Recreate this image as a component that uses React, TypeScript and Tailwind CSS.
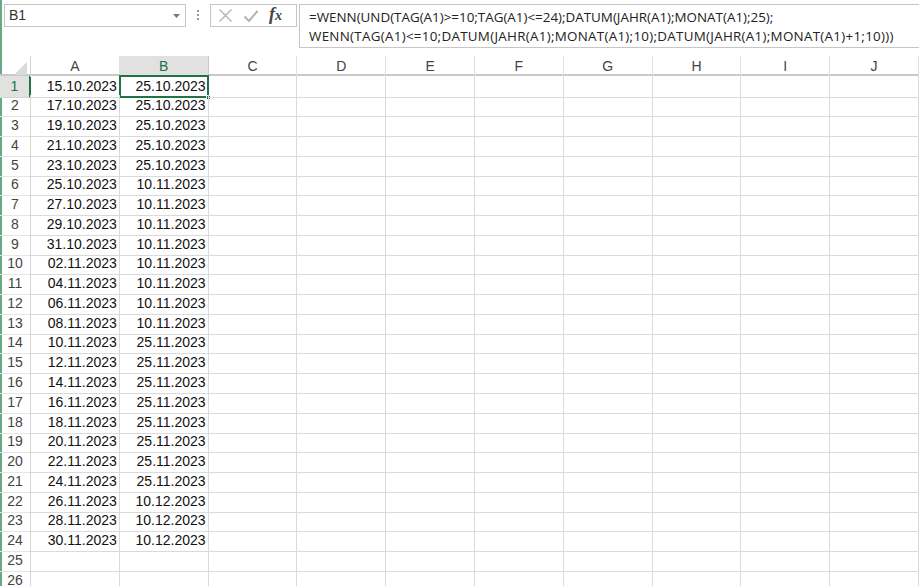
import React from "react";

const colA = [
  "15.10.2023", "17.10.2023", "19.10.2023", "21.10.2023", "23.10.2023", "25.10.2023",
  "27.10.2023", "29.10.2023", "31.10.2023", "02.11.2023", "04.11.2023", "06.11.2023",
  "08.11.2023", "10.11.2023", "12.11.2023", "14.11.2023", "16.11.2023", "18.11.2023",
  "20.11.2023", "22.11.2023", "24.11.2023", "26.11.2023", "28.11.2023", "30.11.2023",
];
const colB = [
  "25.10.2023", "25.10.2023", "25.10.2023", "25.10.2023", "25.10.2023", "10.11.2023",
  "10.11.2023", "10.11.2023", "10.11.2023", "10.11.2023", "10.11.2023", "10.11.2023",
  "10.11.2023", "25.11.2023", "25.11.2023", "25.11.2023", "25.11.2023", "25.11.2023",
  "25.11.2023", "25.11.2023", "25.11.2023", "10.12.2023", "10.12.2023", "10.12.2023",
];
const cols = ["A", "B", "C", "D", "E", "F", "G", "H", "I", "J"];
const rows = Array.from({ length: 26 }, (_, i) => i + 1);

const gridCols = "grid grid-cols-[31px_repeat(10,88.8px)]";

function FormulaBar() {
  return (
    <div className="relative h-[56px] shrink-0">
      {/* name box */}
      <div className="absolute left-[4px] top-[4px] w-[182px] h-[23px] border border-[#c6c6c6] flex items-center pl-[4px] text-[14px] text-[#333]">
        B1
        <svg className="absolute right-[5px] top-[9px]" width="7" height="4" viewBox="0 0 7 4">
          <path d="M0 0h7L3.5 4z" fill="#777" />
        </svg>
      </div>
      {/* grip dots */}
      <div className="absolute left-[197px] top-[10px] flex flex-col gap-[2px]">
        <span className="w-[2px] h-[2px] bg-[#999]" />
        <span className="w-[2px] h-[2px] bg-[#999]" />
        <span className="w-[2px] h-[2px] bg-[#999]" />
      </div>
      {/* cancel / enter / fx */}
      <div className="absolute left-[210px] top-[4px] w-[87px] h-[23px] border border-[#c6c6c6] flex items-center">
        <svg className="ml-[7px]" width="15" height="15" viewBox="0 0 15 15">
          <path d="M1.5 1.5l12 12M13.5 1.5l-12 12" stroke="#b4b4b4" strokeWidth="1.4" />
        </svg>
        <svg className="ml-[10px]" width="16" height="14" viewBox="0 0 16 14">
          <path d="M1.5 7.5l4.5 4.5L14.5 2" stroke="#b4b4b4" strokeWidth="2" fill="none" />
        </svg>
        <span className="ml-[10px] text-[18px] italic font-bold text-[#444] font-['Liberation_Serif',serif] leading-none -mt-[3px]">
          f<span className="text-[14px]">x</span>
        </span>
      </div>
      {/* formula box */}
      <div className="absolute left-[299px] top-[4px] w-[640px] h-[44px] border border-[#c6c6c6] pl-[9px] pt-[3px] text-[13.4px] leading-[19px] text-[#222] font-['Open_Sans',sans-serif]">
        <div>=WENN(UND(TAG(A1)&gt;=10;TAG(A1)&lt;=24);DATUM(JAHR(A1);MONAT(A1);25);</div>
        <div className="tracking-[0.28px]">WENN(TAG(A1)&lt;=10;DATUM(JAHR(A1);MONAT(A1);10);DATUM(JAHR(A1);MONAT(A1)+1;10)))</div>
      </div>
    </div>
  );
}

function Sheet() {
  return (
    <div className="flex flex-col">
      {/* column header row */}
      <div className={`${gridCols} h-[19.5px] border-b-[2px] border-[#c8c8c8]`}>
        <div className="relative border-r border-[#d4d4d4]">
          <svg className="absolute right-[3px] bottom-[2px]" width="13" height="13" viewBox="0 0 13 13">
            <path d="M13 0v13H0z" fill="#dadada" />
          </svg>
        </div>
        {cols.map(c => (
          <div
            key={c}
            className={
              c === "B"
                ? "flex items-center justify-center bg-[#e1e1e1] border-r border-[#c8c8c8] text-[14px] text-[#217346]"
                : "flex items-center justify-center border-r border-[#e0e0e0] text-[14px] text-[#444]"
            }
          >
            {c}
          </div>
        ))}
      </div>
      {rows.map(r => (
        <div key={r} className={`${gridCols} h-[19.77px]`}>
          <div
            className={
              r === 1
                ? "flex items-center justify-center bg-[#e1e1e1] border-r-[2px] border-[#217346] border-b border-b-[#d4d4d4] text-[14px] text-[#217346]"
                : "flex items-center justify-center border-r border-[#d4d4d4] border-b border-b-[#e6e6e6] text-[14px] text-[#444]"
            }
          >
            {r}
          </div>
          {cols.map(c => {
            const val = c === "A" ? colA[r - 1] : c === "B" ? colB[r - 1] : "";
            const sel = c === "B" && r === 1;
            return (
              <div
                key={c}
                className="relative flex items-center justify-end pr-[2px] border-r border-b border-[#dadada] text-[14px] text-[#111]"
              >
                {val}
                {sel && (
                  <>
                    <div className="absolute -left-[1px] -top-[1px] -right-[1px] -bottom-[1px] border-2 border-[#217346]" />
                    <div className="absolute -right-[3px] -bottom-[3px] w-[5px] h-[5px] bg-[#217346] border border-white" />
                  </>
                )}
              </div>
            );
          })}
        </div>
      ))}
    </div>
  );
}

export default function App() {
  return (
    <div className="w-[919px] h-[586px] overflow-hidden bg-white flex font-['Liberation_Sans',sans-serif]">
      <div className="w-[1.5px] shrink-0 bg-[#6aa883]" />
      <div className="flex-1 flex flex-col -ml-[1.5px]">
        <FormulaBar />
        <Sheet />
      </div>
    </div>
  );
}
